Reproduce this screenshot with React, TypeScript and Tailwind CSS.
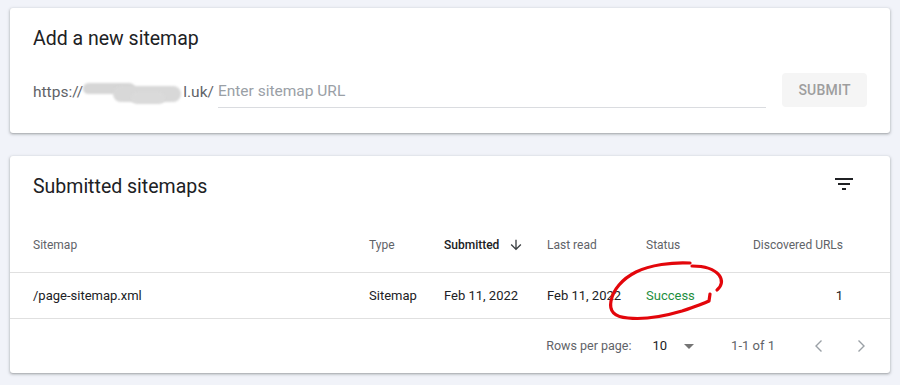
import type { ReactNode } from 'react'

const font = { fontFamily: 'Roboto, "Liberation Sans", Arial, sans-serif' }

const cols = 'grid grid-cols-[336px_75px_103px_99px_1fr_auto] items-center pl-[23px] pr-[47px]'

function Card({ children, className = '' }: { children: ReactNode; className?: string }) {
  return (
    <div
      className={`rounded-[3px] bg-white shadow-[0_1px_2px_rgba(60,64,67,0.3),0_1px_3px_1px_rgba(60,64,67,0.15)] ${className}`}
    >
      {children}
    </div>
  )
}

function FilterIcon() {
  return (
    <svg viewBox="0 0 24 24" className="size-6 fill-[#202124]">
      <path d="M10 18h4v-2h-4v2zM3 6v2h18V6H3zm3 7h12v-2H6v2z" />
    </svg>
  )
}

function ArrowDown() {
  return (
    <svg viewBox="0 0 24 24" className="size-4 fill-[#3c4043]">
      <path d="M20 12l-1.41-1.41L13 16.17V4h-2v12.17l-5.58-5.59L4 12l8 8 8-8z" />
    </svg>
  )
}

function Chevron({ dir }: { dir: 'left' | 'right' }) {
  return (
    <svg viewBox="0 0 24 24" className="size-6 fill-none stroke-[#9aa0a6] stroke-[1.4]">
      {dir === 'left' ? <path d="M14.5 6.5L9 12l5.5 5.5" /> : <path d="M9.5 6.5L15 12l-5.5 5.5" />}
    </svg>
  )
}

function Annotation() {
  return (
    <svg
      className="pointer-events-none absolute left-0 top-0 h-[385px] w-[900px]"
      viewBox="0 0 900 385"
      fill="none"
      stroke="#e3060b"
      strokeWidth="3.2"
      strokeLinecap="round"
      strokeLinejoin="round"
    >
      <path d="M690 263 C672 262 650 265 636 272 C622 279 613 290 611 301 C609 311 614 317 628 318 C646 320 665 316 682 311 C694 307 703 304 709 301 L710 294" />
      <path d="M692 266 C703 266 714 269 719 275 C723 280 722 286 717 290" />
    </svg>
  )
}

export default function App() {
  return (
    <div style={font} className="relative flex h-[385px] w-[900px] flex-col gap-[23px] bg-[#f1f3f9] px-[10px] pt-[8px]">
      <Card className="h-[125px] pl-[23px] pr-[23px] pt-[17px]">
        <div className="text-[19.5px] leading-[28px] text-[#202124]">Add a new sitemap</div>
        <div className="mt-[20px] flex h-[34px] items-center">
          <div className="mt-[5px] flex items-center text-[15.5px] text-[#5f6368]">
            <span>https://</span>
            <span className="relative inline-block h-[18px] w-[100px]">
              <span className="absolute left-0 top-[-1px] h-[11px] w-[52px] rounded-full bg-[#d6d6d6] blur-[1px]" />
              <span className="absolute left-[30px] top-[2px] h-[16px] w-[68px] rounded-full bg-[#d8d8d8] blur-[1px]" />
              <span className="absolute left-[48px] top-[8px] h-[12px] w-[34px] rounded-full bg-[#dadada] blur-[1px]" />
            </span>
            <span>l.uk/</span>
          </div>
          <div className="ml-[4px] mt-[5px] flex h-[30px] flex-1 items-center border-b border-[#dadce0] text-[15.5px] text-[#9aa0a6]">
            Enter sitemap URL
          </div>
          <button className="ml-[16px] h-[34px] w-[85px] rounded-[4px] bg-[#f5f5f5] text-[14px] font-medium tracking-[0.2px] text-[#9e9e9e]">
            SUBMIT
          </button>
        </div>
      </Card>

      <Card className="h-[217px]">
        <div className="flex items-start justify-between pl-[23px] pr-[34px] pt-[17px]">
          <div className="text-[19.5px] leading-[28px] text-[#202124]">Submitted sitemaps</div>
          <div className="mt-[-1px]">
            <FilterIcon />
          </div>
        </div>

        <div className={`${cols} mt-[16px] h-[56px] border-b border-[#e0e0e0] text-[12px] text-[#5f6368]`}>
          <div>Sitemap</div>
          <div>Type</div>
          <div className="flex items-center gap-[9px] font-medium text-[#202124]">
            Submitted
            <ArrowDown />
          </div>
          <div>Last read</div>
          <div>Status</div>
          <div className="text-right">Discovered URLs</div>
        </div>

        <div className={`${cols} h-[46px] border-b border-[#e0e0e0] text-[13px] text-[#202124]`}>
          <div>/page-sitemap.xml</div>
          <div>Sitemap</div>
          <div>Feb 11, 2022</div>
          <div>Feb 11, 2022</div>
          <div className="text-[#1e8e3e]">Success</div>
          <div className="text-right">1</div>
        </div>

        <div className="flex h-[54px] items-center justify-end pr-[17px] text-[13px] text-[#5f6368]">
          <span className="text-[12.5px]">Rows per page:</span>
          <span className="ml-[21px] text-[#202124]">10</span>
          <svg viewBox="0 0 24 24" className="ml-[10px] size-6 fill-[#757575]">
            <path d="M7 10l5 5 5-5z" />
          </svg>
          <span className="ml-[30px]">1-1 of 1</span>
          <span className="ml-[32px]">
            <Chevron dir="left" />
          </span>
          <span className="ml-[18px]">
            <Chevron dir="right" />
          </span>
        </div>
      </Card>

      <Annotation />
    </div>
  )
}
